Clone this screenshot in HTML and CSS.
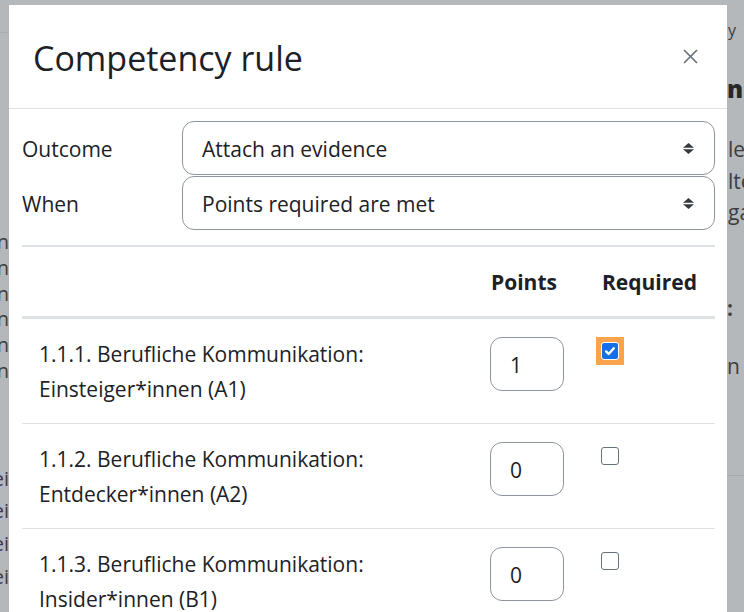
FILE: index.html
```html
<!DOCTYPE html>
<html lang="en">
<head>
    <meta charset="UTF-8">
    <meta name="viewport" content="width=device-width, initial-scale=1.0">
    <title>Competency rule</title>
    <link rel="stylesheet" href="styles.css">
</head>
<body>

<div class="page">

    <div class="page-left">
        <div class="nav-line"></div>
        <div class="bg-list">
            <p>Kommunikation</p>
            <p>Kommunikation</p>
            <p>Kommunikation</p>
            <p>Kommunikation</p>
            <p>Kommunikation</p>
            <p>Kommunikation</p>
        </div>
        <div class="bg-list bg-list-wide">
            <p>Einstei</p>
            <p>Einstei</p>
            <p>Einstei</p>
            <p>Einstei</p>
            <p>.</p>
        </div>
    </div>

    <div class="modal">
        <div class="modal-header">
            <h5 class="modal-title">Competency rule</h5>
            <button class="close" type="button" aria-label="Close">
                <svg width="15" height="15" viewBox="0 0 15 15">
                    <path d="M1 1L14 14M14 1L1 14" stroke="#6a737b" stroke-width="1.7" fill="none"/>
                </svg>
            </button>
        </div>

        <div class="modal-body">
            <div class="form-row">
                <label for="outcome">Outcome</label>
                <select id="outcome" class="custom-select">
                    <option>Attach an evidence</option>
                </select>
            </div>
            <div class="form-row">
                <label for="when">When</label>
                <select id="when" class="custom-select">
                    <option>Points required are met</option>
                </select>
            </div>

            <table class="rule-table">
                <colgroup>
                    <col>
                    <col class="col-points">
                    <col class="col-required">
                </colgroup>
                <thead>
                    <tr>
                        <th></th>
                        <th>Points</th>
                        <th>Required</th>
                    </tr>
                </thead>
                <tbody>
                    <tr>
                        <td>1.1.1. Berufliche Kommunikation:<br>Einsteiger*innen (A1)</td>
                        <td><input type="text" class="points-input" value="1"></td>
                        <td><span class="focus-ring"><input type="checkbox" class="req" checked></span></td>
                    </tr>
                    <tr>
                        <td>1.1.2. Berufliche Kommunikation:<br>Entdecker*innen (A2)</td>
                        <td><input type="text" class="points-input" value="0"></td>
                        <td><input type="checkbox" class="req"></td>
                    </tr>
                    <tr>
                        <td>1.1.3. Berufliche Kommunikation:<br>Insider*innen (B1)</td>
                        <td><input type="text" class="points-input" value="0"></td>
                        <td><input type="checkbox" class="req"></td>
                    </tr>
                </tbody>
            </table>
        </div>
    </div>

    <div class="page-right">
        <p class="r-crumb">y</p>
        <h2 class="r-heading">nu</h2>
        <div class="r-text">
            <p>lernen</p>
            <p>lten</p>
            <p>gabe</p>
        </div>
        <p class="r-label">:</p>
        <p class="r-line">n <span class="r-tag">&bull;</span></p>
        <div class="r-rule"></div>
    </div>

</div>

</body>
</html>
```

FILE: styles.css
```css
html, body {
    margin: 0;
    padding: 0;
    height: 100%;
}
body {
    font-family: "Open Sans", "Noto Sans", sans-serif;
    background-color: #b5b8bb;
    color: #1d2125;
    overflow: hidden;
}
.page {
    display: flex;
    height: 612px;
}

/* page behind the backdrop */
.page-left {
    width: 9px;
    flex-shrink: 0;
    overflow: hidden;
    color: #3b3d40;
}
.nav-line {
    height: 32px;
    border-bottom: 1px solid #aaadb0;
}
.bg-list {
    margin-top: 196px;
    font-size: 20px;
    line-height: 25.8px;
}
.bg-list p {
    margin: 0;
    display: flex;
    justify-content: flex-end;
    white-space: nowrap;
}
.bg-list-wide {
    margin-top: 79px;
    line-height: 32.7px;
}
.page-right {
    flex: 1;
    overflow: hidden;
    color: #3b3d40;
    white-space: nowrap;
}
.page-right p {
    margin: 0;
}
.r-crumb {
    margin-top: 20px !important;
    font-size: 16px;
    line-height: 20px;
    padding-left: 1px;
}
.r-heading {
    margin: 29px 0 0;
    font-size: 24px;
    line-height: 40px;
    font-weight: 800;
    color: #26282b;
}
.r-text {
    margin-top: 25px;
    font-size: 21px;
    line-height: 31.5px;
    padding-left: 1px;
}
.r-label {
    margin-top: 64px !important;
    font-size: 21px;
    line-height: 31.5px;
    font-weight: 700;
}
.r-line {
    margin-top: 27px !important;
    font-size: 21px;
    line-height: 31.5px;
}
.r-tag {
    color: #c9894a;
}
.r-rule {
    margin-top: 92px;
    border-top: 1px solid #a6a9ac;
}

/* modal */
.modal {
    width: 718px;
    flex-shrink: 0;
    margin-top: 5px;
    background-color: #fff;
}
.modal-header {
    display: flex;
    align-items: center;
    justify-content: space-between;
    height: 104px;
    padding: 3px 29px 0 24px;
    border-bottom: 1px solid #dee2e6;
    box-sizing: border-box;
}
.modal-title {
    margin: 0;
    font-size: 34px;
    font-weight: 400;
    line-height: 1.2;
}
.close {
    background: none;
    border: none;
    padding: 0;
    margin-bottom: 3px;
    display: flex;
    cursor: pointer;
}
.modal-body {
    padding: 12px 12px 0 13px;
}
.form-row {
    display: flex;
    align-items: center;
}
.form-row + .form-row {
    margin-top: 1px;
}
.form-row label {
    width: 160px;
    flex-shrink: 0;
    padding-top: 2px;
    font-size: 21px;
}
.custom-select {
    flex: 1;
    height: 54px;
    padding: 2px 44px 0 19px;
    font-family: inherit;
    font-size: 21px;
    color: #1d2125;
    border: 1px solid #8f959e;
    border-radius: 12px;
    appearance: none;
    -webkit-appearance: none;
    background: #fff url("data:image/svg+xml,%3csvg xmlns='http://www.w3.org/2000/svg' viewBox='0 0 11 11'%3e%3cpath fill='%23343a40' d='M5.5 0L0 4.8h11zM5.5 11L0 6.2h11z'/%3e%3c/svg%3e") no-repeat right 20px center / 11px 11px;
}

/* table */
.rule-table {
    width: 100%;
    margin-top: 15px;
    border-collapse: collapse;
    table-layout: fixed;
    font-size: 21px;
    line-height: 35px;
}
.col-points {
    width: 111px;
}
.col-required {
    width: 130px;
}
.rule-table th,
.rule-table td {
    padding: 18px 17px 16px;
    text-align: left;
    vertical-align: top;
}
.rule-table th {
    font-weight: 700;
    border-top: 2px solid #dee2e6;
    border-bottom: 3px solid #dee2e6;
}
.rule-table td {
    border-top: 1px solid #dee2e6;
}
.points-input {
    display: block;
    width: 74px;
    height: 54px;
    margin: 0 0 0 -1px;
    padding: 2px 0 0 19px;
    box-sizing: border-box;
    font-family: inherit;
    font-size: 21px;
    color: #1d2125;
    border: 1px solid #8f959e;
    border-radius: 12px;
}
.req {
    display: block;
    width: 18px;
    height: 18px;
    margin: 5px 0 0 -1px;
    border: 1px solid #6a737b;
    border-radius: 3px;
    background-color: #fff;
    appearance: none;
    -webkit-appearance: none;
    box-sizing: border-box;
}
.req:checked {
    background: #1570e6 url("data:image/svg+xml,%3csvg xmlns='http://www.w3.org/2000/svg' viewBox='0 0 18 18'%3e%3cpath fill='none' stroke='%23fff' stroke-width='2.6' stroke-linecap='round' stroke-linejoin='round' d='M4.6 9.4l2.9 2.9 5.8-6.4'/%3e%3c/svg%3e") no-repeat center / 100% 100%;
}
.focus-ring {
    display: block;
    width: fit-content;
    padding: 5px;
    margin: 0 0 0 -6px;
    background-color: #f9a34c;
}
.focus-ring .req {
    margin: 0;
    border-color: #fff;
}
```
